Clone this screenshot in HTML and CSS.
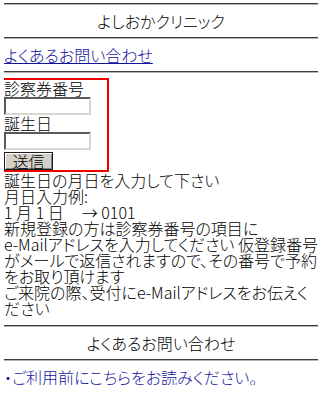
FILE: index.html
```html
<!DOCTYPE html>
<html lang="ja">
<head>
<meta charset="utf-8">
<title>よしおかクリニック</title>
<link rel="stylesheet" href="styles.css">
</head>
<body>
<hr class="rule rule--top">
<div class="title">よしおかクリニック</div>
<hr class="rule">
<div class="line"><a href="#">よくあるお問い合わせ</a></div>
<hr class="rule rule--form">
<form class="login">
  <div class="label">診察券番号</div>
  <input class="field" type="text">
  <div class="label">誕生日</div>
  <input class="field" type="text">
  <button class="submit" type="button">送信</button>
</form>
<p class="note">誕生日の月日を入力して下さい<br>月日入力例:<br>1 月 1 日<span class="arrow">→</span> 0101<br>新規登録の方は診察券番号の項目に<br>e-Mailアドレスを入力してください 仮登録番号<br>がメールで返信されますので、その番号で予約<br>をお取り頂けます<br>ご来院の際、受付にe-Mailアドレスをお伝えく<br>ださい</p>
<hr class="rule rule--after-note">
<div class="title">よくあるお問い合わせ</div>
<hr class="rule">
<div class="line"><a href="#">・ご利用前にこちらをお読みください。</a></div>
</body>
</html>
```

FILE: styles.css
```css
html, body {
  background: #ffffff;
}
body {
  margin: 0 4px;
  color: #000000;
  font-family: "Noto Sans CJK JP", "Liberation Sans", sans-serif;
  font-size: 16px;
  font-weight: 300;
  line-height: 16px;
  font-feature-settings: "palt";
}
.rule {
  height: 0;
  margin: 8px 0;
  border: 0;
  border-top: 1px solid #3c3c3c;
  border-bottom: 1px solid #b4b4ac;
}
.rule--top {
  margin-top: 3px;
}
.rule--form {
  margin-bottom: 5px;
}
.rule--after-note {
  margin-top: 9px;
}
.title {
  text-align: center;
}
.line a {
  color: #12129c;
  text-decoration: underline;
}
.login {
  box-sizing: border-box;
  width: 108px;
  margin: 0 0 0 -3px;
  padding: 0 0 0 1px;
  border: 2px solid #ee0000;
}
.label {
  line-height: 17px;
  height: 17px;
}
.field {
  display: block;
  box-sizing: border-box;
  width: 87px;
  height: 18px;
  margin: 0;
  padding: 0;
  background: #ffffff;
  border-style: solid;
  border-width: 2px;
  border-color: #5a5a5a #d8d6d0 #d8d6d0 #5a5a5a;
}
.submit {
  display: block;
  box-sizing: border-box;
  width: 49px;
  height: 18px;
  margin: 2px 0 0;
  padding: 0;
  background: #d4d0c8;
  color: #000000;
  font-family: "Noto Sans CJK JP", sans-serif;
  font-size: 16px;
  font-weight: 300;
  line-height: 14px;
  border: 1px solid #1e1e1e;
  box-shadow: inset 1px 1px 0 #ffffff, inset -1px -1px 0 #808080;
}
.note {
  margin: 0;
  white-space: nowrap;
}
.arrow {
  margin-left: 18px;
}
```
